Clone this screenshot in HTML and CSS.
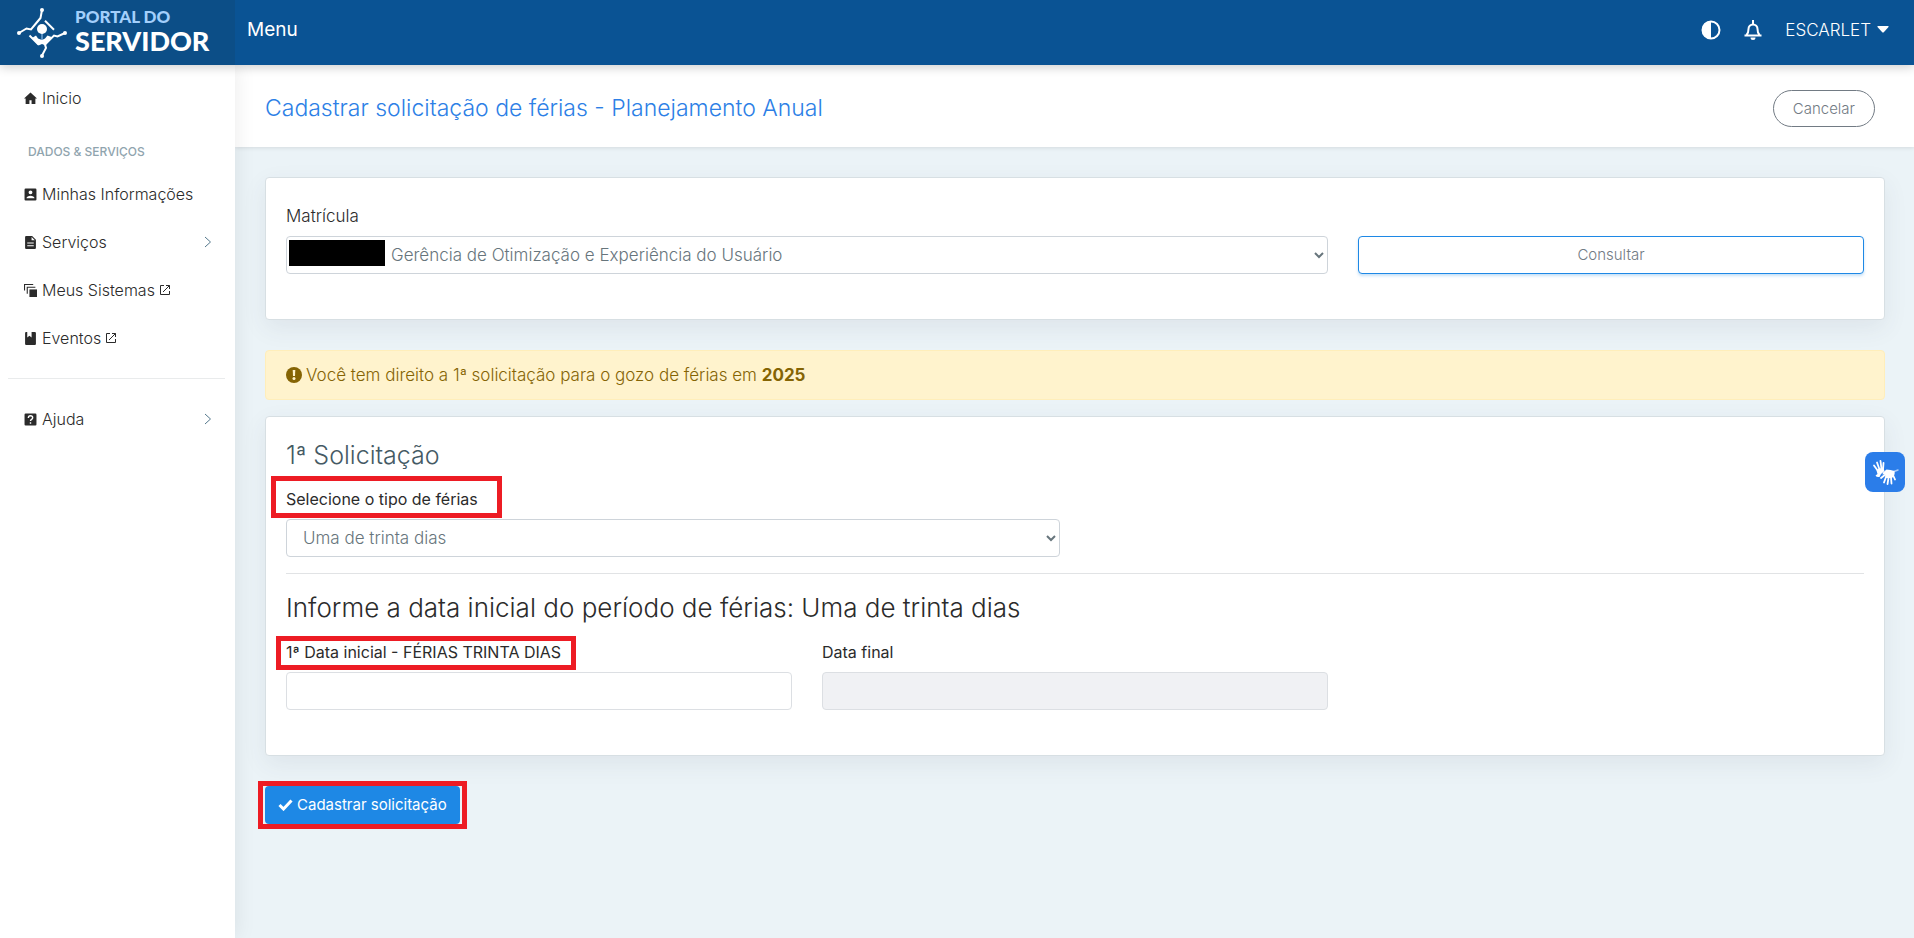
FILE: index.html
```html
<!DOCTYPE html>
<html lang="pt-BR">
<head>
<meta charset="utf-8">
<title>Portal do Servidor</title>
<meta name="viewport" content="width=device-width, initial-scale=1">
<link rel="stylesheet" href="styles.css">
</head>
<body>
<header class="topbar">
  <a class="brand" href="#" aria-label="Portal do Servidor">
    <svg class="brand-mark" viewBox="0 0 52 52" aria-hidden="true">
      <g fill="none" stroke="#fff" stroke-width="2">
        <path d="M26 3l-1.500 8-2.500 3-7 8.500-4.500-1L3 26"/>
        <path d="M29 13.700l9 9"/>
        <path d="M13.500 28.500l9 9"/>
        <path d="M49 26l-7.500 3.500-3.500-1-9 9 1 3.500-4 7.500"/>
        <path d="M26 24v10" stroke-width="1" stroke="#a3cffb"/>
      </g>
      <path d="M16 31l4-2.500 2 3 4 1.500 3-1.500 2.500-3 4 1.500-6 8.500-3.500-1.500-3.500 1.500z" fill="#fff"/>
      <g fill="#fff"><circle cx="26" cy="22" r="5"/><circle cx="26" cy="3" r="2"/><circle cx="3" cy="26" r="2"/><circle cx="49" cy="26" r="2"/><circle cx="26" cy="49" r="2"/></g>
    </svg>
    <span class="brand-name"><span class="brand-top">PORTAL DO</span><span class="brand-bottom">SERVIDOR</span></span>
  </a>
  <nav class="topnav">
    <a class="top-link" href="#">Menu</a>
    <div class="top-actions">
      <button class="icon-button" type="button" aria-label="Contraste">
        <svg width="20" height="20" viewBox="0 0 20 20"><circle cx="10" cy="10" r="8.500" fill="none" stroke="#fff" stroke-width="2"/><path d="M10 1a9 9 0 0 0 0 18z" fill="#fff"/></svg>
      </button>
      <button class="icon-button" type="button" aria-label="Notificações">
        <svg width="20" height="20" viewBox="0 0 20 20"><path d="M1.500 15.500h17M3.500 15c1.500-1.500 2-2.500 2-6a4.500 4.500 0 0 1 9 0c0 3.500.5 4.500 2 6" fill="none" stroke="#fff" stroke-width="2"/><path d="M9 0h2v4H9zM7.500 17.500h5a2.500 2.500 0 0 1-5 0z" fill="#fff"/></svg>
      </button>
      <button class="user-button" type="button">ESCARLET
        <svg width="12" height="7" viewBox="0 0 12 7" aria-hidden="true"><path d="M1 0h10q1 0 .5 1L7 6Q6 7 5 6L.500 1Q0 0 1 0z" fill="#fff"/></svg>
      </button>
    </div>
  </nav>
</header>

<div class="shell">
  <aside class="sidebar">
    <nav class="side-nav">
      <a class="side-link" href="#"><svg class="side-icon" viewBox="0 0 12 12"><path d="M6 .5l6 5.500h-1.500V11H7V7.500H5V11H1.500V6H0z"/></svg>Inicio</a>
      <p class="side-title">DADOS &amp; SERVIÇOS</p>
      <a class="side-link" href="#"><svg class="side-icon" viewBox="0 0 12 12"><path fill-rule="evenodd" d="M1.500.5h9q1 0 1 1v9q0 1-1 1h-9q-1 0-1-1v-9q0-1 1-1zM6 2.200a1.800 1.800 0 1 0 0 3.600 1.800 1.800 0 0 0 0-3.600zM2.300 9.500h7.400C9.700 6.300 2.300 6.300 2.300 9.500z"/></svg>Minhas Informações</a>
      <a class="side-link" href="#"><svg class="side-icon" viewBox="0 0 12 12"><path fill-rule="evenodd" d="M2 0h5.500L11 3.500V11q0 1-1 1H2q-1 0-1-1V1q0-1 1-1zM7 1v3h3zM3 6v1h6V6zM3 8.500v1h6v-1z"/></svg>Serviços<svg class="chevron" viewBox="0 0 8 12"><path d="M1 1l5.500 5L1 11"/></svg></a>
      <a class="side-link" href="#"><svg class="side-icon" viewBox="0 0 12 12"><path d="M5 5h7v7H5z"/><path d="M.5 6V.5h8M3 9V3h7.500" fill="none" stroke="#2b2b2b"/></svg>Meus Sistemas<svg class="external" viewBox="0 0 10 10"><path d="M4 .5H.5v9h9V6M6 .5h3.500V4M9.500.5L3 7"/></svg></a>
      <a class="side-link" href="#"><svg class="side-icon" viewBox="0 0 12 12"><path d="M2 0h1v5l2-1.500L7 5V0h3q1 0 1 1v10q0 1-1 1H2q-1 0-1-1V1q0-1 1-1z"/></svg>Eventos<svg class="external" viewBox="0 0 10 10"><path d="M4 .5H.5v9h9V6M6 .5h3.500V4M9.500.5L3 7"/></svg></a>
      <hr class="side-rule">
      <a class="side-link" href="#"><svg class="side-icon" viewBox="0 0 12 12"><rect x=".5" y=".5" width="11" height="11" rx="1"/><path d="M4 4.500q0-2 2-2t2 1.800Q8 5.200 7 5.800q-1 .6-1 1.500M6 8.500V10" fill="none" stroke="#fff" stroke-width="1.300"/></svg>Ajuda<svg class="chevron" viewBox="0 0 8 12"><path d="M1 1l5.500 5L1 11"/></svg></a>
    </nav>
  </aside>

  <main class="main">
    <div class="page-head">
      <h1 class="page-title">Cadastrar solicitação de férias - Planejamento Anual</h1>
      <button class="cancel-button" type="button">Cancelar</button>
    </div>

    <form class="content">
      <section class="card search-card">
        <div class="grid">
          <div class="field span-8">
            <label class="label label-light" for="matricula">Matrícula</label>
            <div class="select-wrap">
              <select class="control masked-select" id="matricula"><option>Gerência de Otimização e Experiência do Usuário</option></select>
              <span class="mask"></span>
            </div>
          </div>
          <button class="query-button span-4" type="button">Consultar</button>
        </div>
      </section>

      <div class="alert" role="alert">
        <svg class="alert-icon" viewBox="0 0 16 16" aria-hidden="true"><circle cx="8" cy="8" r="8"/><path d="M6.700 3h2.600L9 9H7z" fill="#fff3cd"/><circle cx="8" cy="11.500" r="1.500" fill="#fff3cd"/></svg>
        <span>Você tem direito a 1ª solicitação para o gozo de férias em <strong>2025</strong></span>
      </div>

      <section class="card request-card">
        <h2 class="card-title">1ª Solicitação</h2>
        <div class="grid">
          <div class="field span-6">
            <label class="label mark mark-type" for="tipo">Selecione o tipo de férias</label>
            <select class="control" id="tipo"><option>Uma de trinta dias</option></select>
          </div>
        </div>
        <hr class="rule">
        <h3 class="card-subtitle">Informe a data inicial do período de férias: Uma de trinta dias</h3>
        <div class="grid">
          <div class="field span-4">
            <label class="label mark mark-date" for="inicio">1ª Data inicial - FÉRIAS TRINTA DIAS</label>
            <input class="control date" id="inicio" type="text">
          </div>
          <div class="field span-4">
            <label class="label" for="fim">Data final</label>
            <input class="control date" id="fim" type="text" disabled>
          </div>
        </div>
      </section>

      <div class="actions mark mark-submit">
        <button class="submit-button" type="submit"><svg width="15" height="12" viewBox="0 0 15 12" aria-hidden="true"><path d="M1.500 6l4 4 8-8.500" fill="none" stroke="#fff" stroke-width="3"/></svg>Cadastrar solicitação</button>
      </div>
    </form>
  </main>
</div>

<button class="vlibras" type="button" aria-label="Acessível em Libras">
  <svg width="28" height="28" viewBox="0 0 28 28">
    <g fill="none" stroke="#fff" stroke-linecap="round" stroke-width="1.800">
      <path d="M7 13L3 7.500M8.500 11.500L6 4.500M10.500 11L9.500 3M12 12l.5-7"/>
      <path d="M15 19l-2 5.500M17.500 20L16.500 26M20 19.500l.5 6M22 17l2 4.500"/>
      <path d="M15 16l-5 4"/>
    </g>
    <path d="M23 13.500l4-1.500" fill="none" stroke="#a9cbf8" stroke-linecap="round" stroke-width="1.500"/>
    <path d="M5.500 12.500q3-3.500 7-1.500l1 2-3.500 3-1.500 3q-3 .5-4-1.500l2-1.500z" fill="#fff"/>
    <path d="M12 14.500l3.500-3 4 .5 4 1q1 4-2.500 7h-5.500q-2-1-1-4l-3 .5z" fill="#fff"/>
  </svg>
</button>
</body>
</html>
```
FILE: styles.css
```css
* { box-sizing: border-box; }

body {
  margin: 0;
  min-height: 100vh;
  display: flex;
  flex-direction: column;
  background: #ebf3f7;
  color: #2b2b2b;
  font-family: Inter, "Open Sans", sans-serif;
  font-size: 16px;
  font-weight: 300;
  line-height: 24px;
}

button, input, select { font: inherit; }
button { cursor: pointer; }
a { color: inherit; text-decoration: none; }

.topbar {
  position: relative;
  z-index: 3;
  display: flex;
  height: 65px;
  background: #0a5394;
  box-shadow: 0 2px 10px rgba(0, 0, 0, .2);
  color: #fff;
}

.brand {
  display: flex;
  align-items: center;
  gap: 7px;
  width: 235px;
  padding-left: 16px;
  background: #0c4e87;
}
.brand-mark { width: 52px; height: 52px; }
.brand-name {
  display: flex;
  flex-direction: column;
  padding-bottom: 4px;
  font-family: Lato, sans-serif;
  font-weight: 900;
}
.brand-top { color: #a3cffb; font-size: 17px; line-height: 20px; }
.brand-bottom { font-size: 27px; line-height: 28px; }

.topnav {
  flex: 1;
  display: flex;
  align-items: center;
  justify-content: space-between;
  padding: 0 25px 6px 12px;
}
.top-link { font-size: 19px; font-weight: 400; }
.top-actions { display: flex; align-items: center; gap: 22px; }
.icon-button, .user-button {
  display: flex;
  align-items: center;
  padding: 0;
  border: 0;
  background: none;
  color: #fff;
}
.user-button { gap: 6px; font-size: 17px; }

.shell { flex: 1; display: flex; }

.sidebar {
  position: relative;
  z-index: 2;
  width: 235px;
  background: #fff;
  box-shadow: 1px 0 20px rgba(0, 0, 0, .08);
}
.side-nav { display: flex; flex-direction: column; padding: 9px 10px 10px 8px; }
.side-link {
  display: flex;
  align-items: center;
  gap: 5px;
  padding: 12px 13px 12px 16px;
}
.side-icon { width: 13px; height: 13px; fill: #2b2b2b; }
.side-title {
  margin: 18px 0 6px;
  padding-left: 20px;
  color: #90a4ae;
  font-size: 12px;
  font-weight: 500;
}
.chevron { width: 8px; height: 12px; margin-left: auto; fill: none; stroke: #54788c; }
.external { width: 10px; height: 10px; fill: none; stroke: #2b2b2b; }
.side-rule { width: 100%; margin: 16px 0; border: 0; border-top: 1px solid #e9ebec; }

.main { flex: 1; min-width: 0; }

.page-head {
  display: flex;
  align-items: center;
  justify-content: space-between;
  padding: 23px 39px 19px 30px;
  background: #fff;
  box-shadow: 0 1px 4px rgba(0, 0, 0, .1);
}
.page-title { margin: 0; color: #2d7fe6; font-size: 23px; font-weight: 300; line-height: 40px; }
.cancel-button {
  padding: 7px 19px;
  border: 1px solid #727b84;
  border-radius: 60px;
  background: none;
  color: #727b84;
  font-size: 15px;
  line-height: 21px;
}

.content { padding: 30px 29px 40px 30px; }

.card {
  border: 1px solid #d7dfe3;
  border-radius: 4px;
  background: #fff;
  box-shadow: 0 8px 24px rgba(60, 70, 90, .08);
}
.search-card { padding: 26px 20px 45px; }
.request-card { padding: 21px 20px 45px; }

.grid {
  display: grid;
  grid-template-columns: repeat(12, 1fr);
  column-gap: 30px;
  align-items: end;
}
.span-4 { grid-column: span 4; }
.span-6 { grid-column: span 6; }
.span-8 { grid-column: span 8; }
.field { display: flex; flex-direction: column; align-items: flex-start; gap: 8px; }

.label { font-weight: 400; }
.label-light { font-size: 17px; font-weight: 300; }
.control {
  width: 100%;
  height: 38px;
  padding: 6px 12px;
  border: 1px solid #ced4da;
  border-radius: 4px;
  background: #fff;
  color: #67757c;
  font-size: 17px;
}
.date { border-color: #dcdfe3; }
.date:disabled { background: #f0f1f4; }

.select-wrap { position: relative; width: 100%; display: flex; }
.masked-select { padding-left: 100px; }
.mask { position: absolute; top: 4px; left: 3px; width: 96px; height: 26px; background: #000; }

.query-button {
  height: 38px;
  border: 1px solid #1e88e5;
  border-radius: 4px;
  background: #fff;
  box-shadow: 0 2px 3px rgba(30, 136, 229, .25);
  color: #727b84;
  font-size: 15px;
}

.alert {
  display: flex;
  align-items: center;
  gap: 4px;
  margin: 30px 0 16px;
  padding: 12px 20px;
  border: 1px solid #ffeeba;
  border-radius: 4px;
  background: #fff3cd;
  color: #856404;
  font-size: 17px;
}
.alert-icon { width: 16px; height: 16px; fill: #856404; }
.alert strong { font-weight: 700; }

.card-title { margin: 0 0 15px; color: #455a64; font-size: 25px; font-weight: 300; line-height: 34px; }
.card-subtitle { margin: 0 0 15px; font-size: 26px; font-weight: 300; line-height: 34px; }
.rule { margin: 16px 0 17px; border: 0; border-top: 1px solid #e1e3e5; }

/* Tutorial highlights drawn around the steps */
.mark { position: relative; }
.mark::after { content: ""; position: absolute; border: 5px solid #ed1c24; pointer-events: none; }
.mark-type::after { inset: -11px -24px -7px -15px; }
.mark-date::after { inset: -4px -15px -6px -10px; }
.mark-submit::after { inset: -5px -7px; }

.actions { display: flex; width: fit-content; margin-top: 30px; }
.submit-button {
  display: flex;
  align-items: center;
  gap: 4px;
  padding: 8px 13px;
  border: 0;
  border-radius: 4px;
  background: #1e88e5;
  color: #fff;
  font-size: 15px;
  font-weight: 400;
  line-height: 22px;
}

.vlibras {
  position: fixed;
  z-index: 4;
  top: 452px;
  right: 9px;
  display: grid;
  place-items: center;
  width: 40px;
  height: 40px;
  padding: 0;
  border: 0;
  border-radius: 8px;
  background: #2b7de9;
}
```
